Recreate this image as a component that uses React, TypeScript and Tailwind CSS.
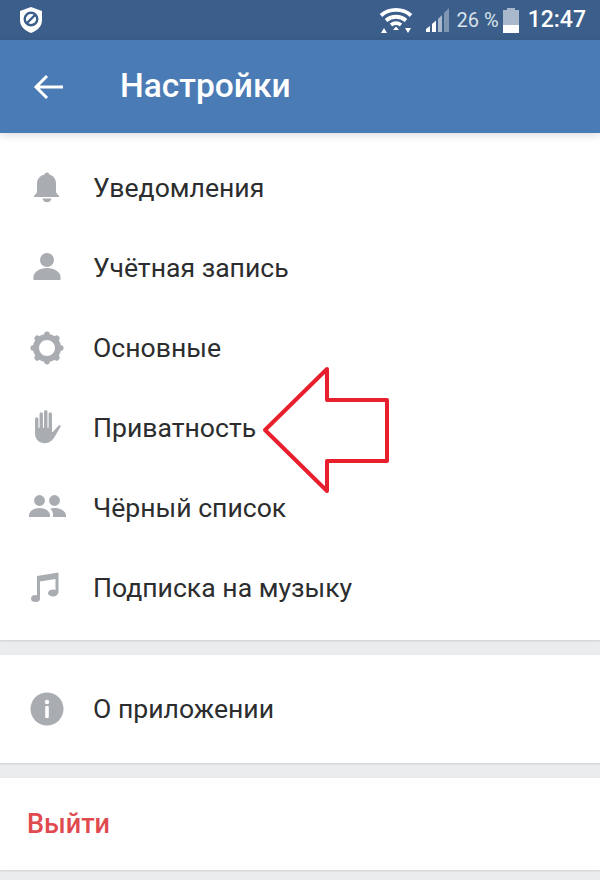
import React from 'react';

const BellIcon = () => (
  <svg className="shrink-0" width="34" height="34" viewBox="0 0 34 34" fill="#a9acb1">
    <path d="M17 1.5c1.3 0 2.2.9 2.3 2.1 4.200 1 6.700 4.500 6.700 9v7.400c0 2.100 1.300 3.300 3 4.800v1.200H4v-1.200c1.700-1.500 3-2.700 3-4.800v-7.400c0-4.500 3-8 7.700-9 .1-1.200 1-2.100 2.300-2.100z" />
    <path d="M12.500 27.500h9c-.4 2.200-2.200 3.800-4.500 3.800s-4.100-1.600-4.500-3.800z" />
  </svg>
);

const UserIcon = () => (
  <svg className="shrink-0" width="34" height="34" viewBox="0 0 34 34" fill="#a9acb1">
    <circle cx="17" cy="9" r="7" />
    <path d="M3.500 29v-3c0-5 6-9 13.500-9s13.500 4 13.500 9v3z" />
  </svg>
);

const GearIcon = () => (
  <svg className="shrink-0" width="34" height="34" viewBox="0 0 34 34">
    <circle cx="17" cy="17" r="11" fill="none" stroke="#a9acb1" strokeWidth="6" />
    <g fill="#a9acb1">
      {[0, 45, 90, 135, 180, 225, 270, 315].map((a) => (
        <rect key={a} x="14.200" y="0.500" width="5.600" height="7" rx="2.400" transform={`rotate(${a} 17 17)`} />
      ))}
    </g>
  </svg>
);

const HandIcon = () => (
  <svg className="shrink-0" width="34" height="36" viewBox="0.6 1.3 30 31.900" fill="#a9acb1">
    <path d="M5 9.500c0-1 .7-1.700 1.500-1.700S8 8.500 8 9.500V17h1V5c0-1 .7-1.700 1.500-1.700S12 4 12 5v12h1V3c0-1 .7-1.700 1.500-1.700S16 2 16 3v14h1V5c0-1 .7-1.700 1.500-1.700S20 4 20 5v15.500l.8.300 4.700-5.300c.9-.9 1.900-.9 2.500-.3-1.500 2.500-3.800 7-6 10.500-2 3-4.400 5-8.300 5C8 30.700 5 27 5 22z" />
  </svg>
);

const FriendsIcon = () => (
  <svg className="shrink-0" width="40" height="34" viewBox="0 0 40 34" fill="#a9acb1">
    <circle cx="12.500" cy="9.500" r="5.400" />
    <circle cx="27.500" cy="9.500" r="5.400" />
    <path d="M2 26v-1.500c0-4.500 5-7.500 10.500-7.500s10.500 3 10.500 7.500V26z" />
    <path d="M26 26v-2.500c0-2.400-1.100-4.500-3-5.800 1.400-.5 2.900-.7 4.500-.7 5 0 11.500 2.500 11.500 7.500V26z" />
  </svg>
);

const MusicIcon = () => (
  <svg className="shrink-0" width="34" height="34" viewBox="0 0 34 34" fill="#a9acb1">
    <path d="M7 5 28.500 1.500V22h-3V8L10 10.500V27.500H7z" />
    <ellipse cx="5.500" cy="27.500" rx="4.500" ry="3.600" />
    <ellipse cx="23" cy="22" rx="5" ry="3.600" />
  </svg>
);

const InfoIcon = () => (
  <svg className="shrink-0" width="34" height="34" viewBox="0 0 34 34">
    <circle cx="17" cy="17" r="16.500" fill="#a9acb1" />
    <circle cx="17" cy="10" r="2.200" fill="#fff" />
    <rect x="15.200" y="14" width="3.600" height="12" rx="1" fill="#fff" />
  </svg>
);

const rows = [
  { label: 'Уведомления', icon: <BellIcon /> },
  { label: 'Учётная запись', icon: <UserIcon /> },
  { label: 'Основные', icon: <GearIcon /> },
  { label: 'Приватность', icon: <HandIcon /> },
  { label: 'Чёрный список', icon: <FriendsIcon /> },
  { label: 'Подписка на музыку', icon: <MusicIcon /> },
];

const Row = ({ label, icon }: { label: string; icon: React.ReactNode }) => (
  <div className="flex h-20 items-center">
    <div className="flex w-[93px] shrink-0 justify-start pl-[30px]">
      <div className="flex w-[34px] justify-center">{icon}</div>
    </div>
    <span className="text-[26.6px] leading-none text-[#2c2d2e]">{label}</span>
  </div>
);

export default function App() {
  return (
    <div className="relative h-[880px] w-[600px] overflow-hidden bg-[#ebecee] font-['Roboto',sans-serif]">
      {/* status bar */}
      <div className="flex h-10 items-center bg-[#3b5f8a] pl-[19px] pr-[14px] text-white">
        <svg width="24" height="28" viewBox="0 0 24 28">
          <path d="M12 1 23 5v9c0 6.500-4.500 10.500-11 13C5.500 24.500 1 20.500 1 14V5z" fill="#fff" />
          <circle cx="12" cy="13" r="6.300" fill="none" stroke="#3b5f8a" strokeWidth="2.400" />
          <path d="M8 17 16 9" stroke="#3b5f8a" strokeWidth="2.400" />
        </svg>
        <div className="ml-auto flex items-center">
          <svg width="34" height="28" viewBox="0 0 34 28" fill="none" stroke="#fff" strokeWidth="3.800">
            <path d="M2 9.500C10 2 24 2 32 9.500" />
            <path d="M7 14.500c6-5 14-5 20 0" />
            <path d="M12 19c3-2.300 7-2.300 10 0" />
            <path d="M17 20.500 14 24h6z" fill="#fff" stroke="none" />
            <path d="M5 22l-3 5h6zM26 22h6l-3 5z" fill="#fff" stroke="none" />
          </svg>
          <svg className="ml-[12px]" width="26" height="26" viewBox="0 0 26 26">
            <path d="M1 25v-3l4-3v6z" fill="#fff" />
            <path d="M7 25v-8l4-3.500V25z" fill="#fff" />
            <path d="M13 25V12l4-4v17z" fill="#a9b8cb" />
            <path d="M19 25V6l5-5v24z" fill="#7f96b3" />
          </svg>
          <span className="ml-[6px] text-[20px] text-[#d9e2ec]">26 %</span>
          <div className="ml-[4px] flex h-[25px] w-4 flex-col">
            <div className="mx-auto h-[2px] w-2 bg-[#a9b8cb]" />
            <div className="h-[15px] bg-[#a9b8cb]" />
            <div className="h-2 bg-white" />
          </div>
          <span className="ml-[9px] text-[23px] font-medium">12:47</span>
        </div>
      </div>

      {/* header */}
      <div className="relative z-10 flex h-[93px] items-center bg-[#4a7bb5] shadow-[0_2px_8px_rgba(0,0,0,0.15)]">
        <svg className="ml-[33px]" width="30" height="26" viewBox="0 0 30 26" fill="none" stroke="#fff" strokeWidth="3">
          <path d="M30 13H3M14 2 3 13l11 11" />
        </svg>
        <span className="ml-[57px] text-[33.5px] font-medium text-white">Настройки</span>
      </div>

      {/* main settings */}
      <div className="bg-white pb-3 pt-[15px] shadow-[0_1px_2px_rgba(0,0,0,0.12)]">
        {rows.map((r) => (
          <Row key={r.label} label={r.label} icon={r.icon} />
        ))}
      </div>

      <div className="mt-[15px] flex h-[108px] items-center bg-white shadow-[0_1px_2px_rgba(0,0,0,0.12)]">
        <div className="w-[93px] shrink-0 pl-[30px]">
          <InfoIcon />
        </div>
        <span className="text-[26.6px] leading-none text-[#2c2d2e]">О приложении</span>
      </div>

      <div className="mt-[15px] flex h-[92px] items-center bg-white pl-[27px] shadow-[0_1px_2px_rgba(0,0,0,0.12)]">
        <span className="text-[27px] font-medium leading-none text-[#e04a4f]">Выйти</span>
      </div>

      {/* red arrow annotation */}
      <svg className="absolute left-[255px] top-[360px] z-20" width="140" height="140" viewBox="255 360 140 140" fill="none">
        <path d="M265 430 327 369V400H387V461H327V491Z" stroke="#e8202e" strokeWidth="4" strokeLinejoin="round" />
      </svg>
    </div>
  );
}
